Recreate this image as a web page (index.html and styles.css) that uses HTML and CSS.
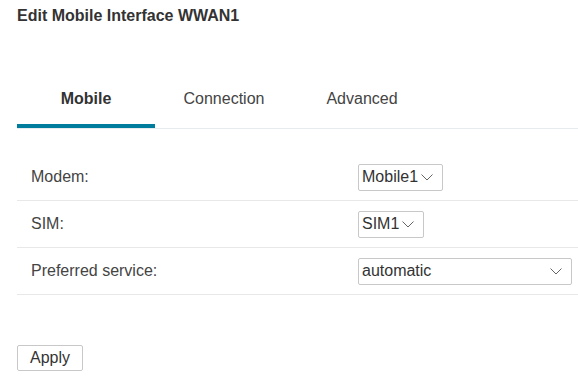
FILE: index.html
```html
<!DOCTYPE html>
<html lang="en">
<head>
    <meta charset="UTF-8">
    <meta name="viewport" content="width=device-width, initial-scale=1.0">
    <title>Edit Mobile Interface WWAN1</title>
    <link rel="stylesheet" href="styles.css">
</head>
<body>
    <div class="page">
        <h1 class="page-title">Edit Mobile Interface WWAN1</h1>

        <!-- tabs -->
        <ul class="tabs">
            <li class="tab active">Mobile</li>
            <li class="tab">Connection</li>
            <li class="tab">Advanced</li>
        </ul>

        <div class="form-list">
            <div class="form-row">
                <label class="form-label">Modem:</label>
                <div class="form-control">
                    <div class="select">
                        <span>Mobile1</span>
                        <svg class="chevron" width="12" height="7" viewBox="0 0 12 7"><path d="M0.5 0.5 L6 6 L11.5 0.5" fill="none" stroke="#666" stroke-width="1"/></svg>
                    </div>
                </div>
            </div>
            <div class="form-row">
                <label class="form-label">SIM:</label>
                <div class="form-control">
                    <div class="select">
                        <span>SIM1</span>
                        <svg class="chevron" width="12" height="7" viewBox="0 0 12 7"><path d="M0.5 0.5 L6 6 L11.5 0.5" fill="none" stroke="#666" stroke-width="1"/></svg>
                    </div>
                </div>
            </div>
            <div class="form-row">
                <label class="form-label">Preferred service:</label>
                <div class="form-control">
                    <div class="select select-wide">
                        <span>automatic</span>
                        <svg class="chevron" width="12" height="7" viewBox="0 0 12 7"><path d="M0.5 0.5 L6 6 L11.5 0.5" fill="none" stroke="#666" stroke-width="1"/></svg>
                    </div>
                </div>
            </div>
        </div>

        <button class="apply-button">Apply</button>
    </div>
</body>
</html>
```

FILE: styles.css
```css
body {
    margin: 0;
    font-family: "Liberation Sans", Arial, sans-serif;
    color: #333;
    background: #fff;
}
.page {
    padding: 7px 0 0 17px;
}
.page-title {
    margin: 0;
    font-size: 16px;
    line-height: 18px;
    font-weight: bold;
    color: #333;
}
.tabs {
    display: flex;
    list-style: none;
    margin: 50px 0 0 0;
    padding: 0;
    border-bottom: 1px solid #e6ecee;
}
.tab {
    width: 138px;
    text-align: center;
    font-size: 16px;
    line-height: 18px;
    padding: 15px 0 16px;
    border-bottom: 4px solid transparent;
    color: #444;
}
.tab.active {
    font-weight: bold;
    color: #333;
    border-bottom-color: #007c9c;
}
.form-list {
    margin-top: 25px;
}
.form-row {
    display: grid;
    grid-template-columns: 327px 1fr;
    align-items: center;
    height: 46px;
    padding: 0 6px 0 14px;
    border-bottom: 1px solid #e8e8e8;
}
.form-label {
    font-size: 16px;
    color: #444;
}
.select {
    display: inline-flex;
    align-items: center;
    gap: 3px;
    height: 25px;
    padding: 0 9px 0 3px;
    border: 1px solid #c8c8c8;
    border-radius: 2px;
    font-size: 16px;
    color: #333;
    vertical-align: middle;
}
.select-wide {
    display: flex;
    justify-content: space-between;
}
.chevron {
    display: block;
    margin-top: 1px;
}
.apply-button {
    margin-top: 50px;
    height: 26px;
    padding: 0 12px;
    background: #fff;
    border: 1px solid #c8c8c8;
    border-radius: 2px;
    font-family: "Liberation Sans", Arial, sans-serif;
    font-size: 16px;
    color: #333;
}
```
